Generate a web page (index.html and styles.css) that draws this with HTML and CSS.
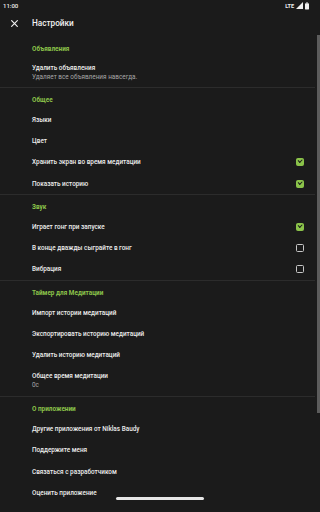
FILE: index.html
```html
<!DOCTYPE html>
<html lang="ru">
<head>
    <meta charset="UTF-8">
    <meta name="viewport" content="width=device-width, initial-scale=1.0">
    <title>Настройки</title>
    <link rel="stylesheet" href="styles.css">
</head>
<body>
    <div class="screen">
        <div class="status-bar">
            <span class="clock">11:00</span>
            <div class="status-icons">
                <span class="lte">LTE</span>
                <svg class="signal" viewBox="0 0 8 8" width="7" height="7"><path d="M8 0 L8 8 L0 8 Z" fill="#eee"/></svg>
                <svg class="battery" viewBox="0 0 5 9" width="4" height="8"><rect x="1.5" y="0" width="2" height="1" fill="#eee"/><rect x="0" y="1" width="5" height="8" rx="0.6" fill="#eee"/></svg>
            </div>
        </div>

        <div class="toolbar">
            <svg class="close-icon" viewBox="0 0 10 10" width="7" height="7">
                <path d="M1 1 L9 9 M9 1 L1 9" stroke="#f2f2f2" stroke-width="1.6" stroke-linecap="square"/>
            </svg>
            <h1>Настройки</h1>
        </div>

        <div class="settings">
            <section class="group first">
                <h2>Объявления</h2>
                <div class="item two-line">
                    <div class="item-title">Удалить объявления</div>
                    <div class="item-sub">Удаляет все объявления навсегда.</div>
                </div>
            </section>

            <section class="group">
                <h2>Общее</h2>
                <div class="item">Языки</div>
                <div class="item">Цвет</div>
                <div class="item">Хранить экран во время медитации <span class="check on"></span></div>
                <div class="item">Показать историю <span class="check on"></span></div>
            </section>

            <section class="group">
                <h2>Звук</h2>
                <div class="item">Играет гонг при запуске <span class="check on"></span></div>
                <div class="item">В конце дважды сыграйте в гонг <span class="check"></span></div>
                <div class="item">Вибрация <span class="check"></span></div>
            </section>

            <section class="group">
                <h2>Таймер для Медитации</h2>
                <div class="item">Импорт истории медитаций</div>
                <div class="item">Экспортировать историю медитаций</div>
                <div class="item">Удалить историю медитаций</div>
                <div class="item two-line">
                    <div class="item-title">Общее время медитации</div>
                    <div class="item-sub">0с</div>
                </div>
            </section>

            <section class="group last">
                <h2>О приложении</h2>
                <div class="item">Другие приложения от Niklas Baudy</div>
                <div class="item">Поддержите меня</div>
                <div class="item">Связаться с разработчиком</div>
                <div class="item">Оценить приложение</div>
            </section>
        </div>

        <div class="scrollbar"></div>
        <div class="nav-handle"></div>
    </div>
</body>
</html>
```

FILE: styles.css
```css
* {
    margin: 0;
    padding: 0;
    box-sizing: border-box;
}

body {
    font-family: Roboto, 'Noto Sans', sans-serif;
    background: #1b1b1b;
    color: #ededed;
    width: 320px;
    height: 512px;
    overflow: hidden;
}

.screen {
    position: relative;
    width: 320px;
    height: 512px;
}

/* status bar */
.status-bar {
    height: 11px;
    display: flex;
    align-items: center;
    justify-content: space-between;
    padding: 0 11px 0 3px;
    font-size: 6px;
    font-weight: 500;
    color: #eee;
}

.status-icons {
    display: flex;
    align-items: center;
    gap: 2px;
}

.lte {
    font-size: 5.5px;
    font-weight: 700;
}

/* toolbar */
.toolbar {
    height: 24px;
    display: flex;
    align-items: center;
    padding-left: 11px;
}

.close-icon {
    margin-right: 14px;
}

.toolbar h1 {
    font-size: 8.2px;
    font-weight: 500;
    color: #f2f2f2;
}

/* settings list */
.group {
    padding-top: 4px;
    border-bottom: 1px solid #2c2c2c;
    margin-right: 5px;
}

.group.first {
    padding-top: 6px;
}

.group.first .two-line {
    height: 29px;
}

.group.last {
    border-bottom: none;
}

.group h2 {
    height: 17px;
    line-height: 17px;
    padding-left: 32px;
    font-size: 6.4px;
    font-weight: 700;
    color: #8bc34a;
}

.item {
    height: 21.3px;
    display: flex;
    align-items: center;
    justify-content: space-between;
    padding: 0 10px 0 32px;
    font-size: 6.4px;
    font-weight: 500;
    color: #ededed;
}

.item.two-line {
    height: 30.5px;
    display: block;
    padding-top: 6px;
}

.item-title {
    line-height: 9px;
}

.item-sub {
    line-height: 8px;
    font-weight: 400;
    color: #a6a6a6;
}

/* checkboxes */
.check {
    width: 8px;
    height: 8px;
    border: 1.4px solid #c8c8c8;
    border-radius: 1.5px;
    position: relative;
    margin-right: 1px;
}

.check.on {
    background: #8bc34a;
    border-color: #8bc34a;
}

.check.on::after {
    content: '';
    position: absolute;
    left: 1.3px;
    top: 0.2px;
    width: 3px;
    height: 1.6px;
    border-left: 1px solid #1b1b1b;
    border-bottom: 1px solid #1b1b1b;
    transform: rotate(-45deg);
}

/* overlays */
.scrollbar {
    position: absolute;
    right: 0;
    top: 35px;
    width: 3px;
    height: 378px;
    background: #5c5c5c;
}

.nav-handle {
    position: absolute;
    left: 116px;
    bottom: 12px;
    width: 88px;
    height: 3px;
    border-radius: 2px;
    background: #e6e6e6;
}
```
